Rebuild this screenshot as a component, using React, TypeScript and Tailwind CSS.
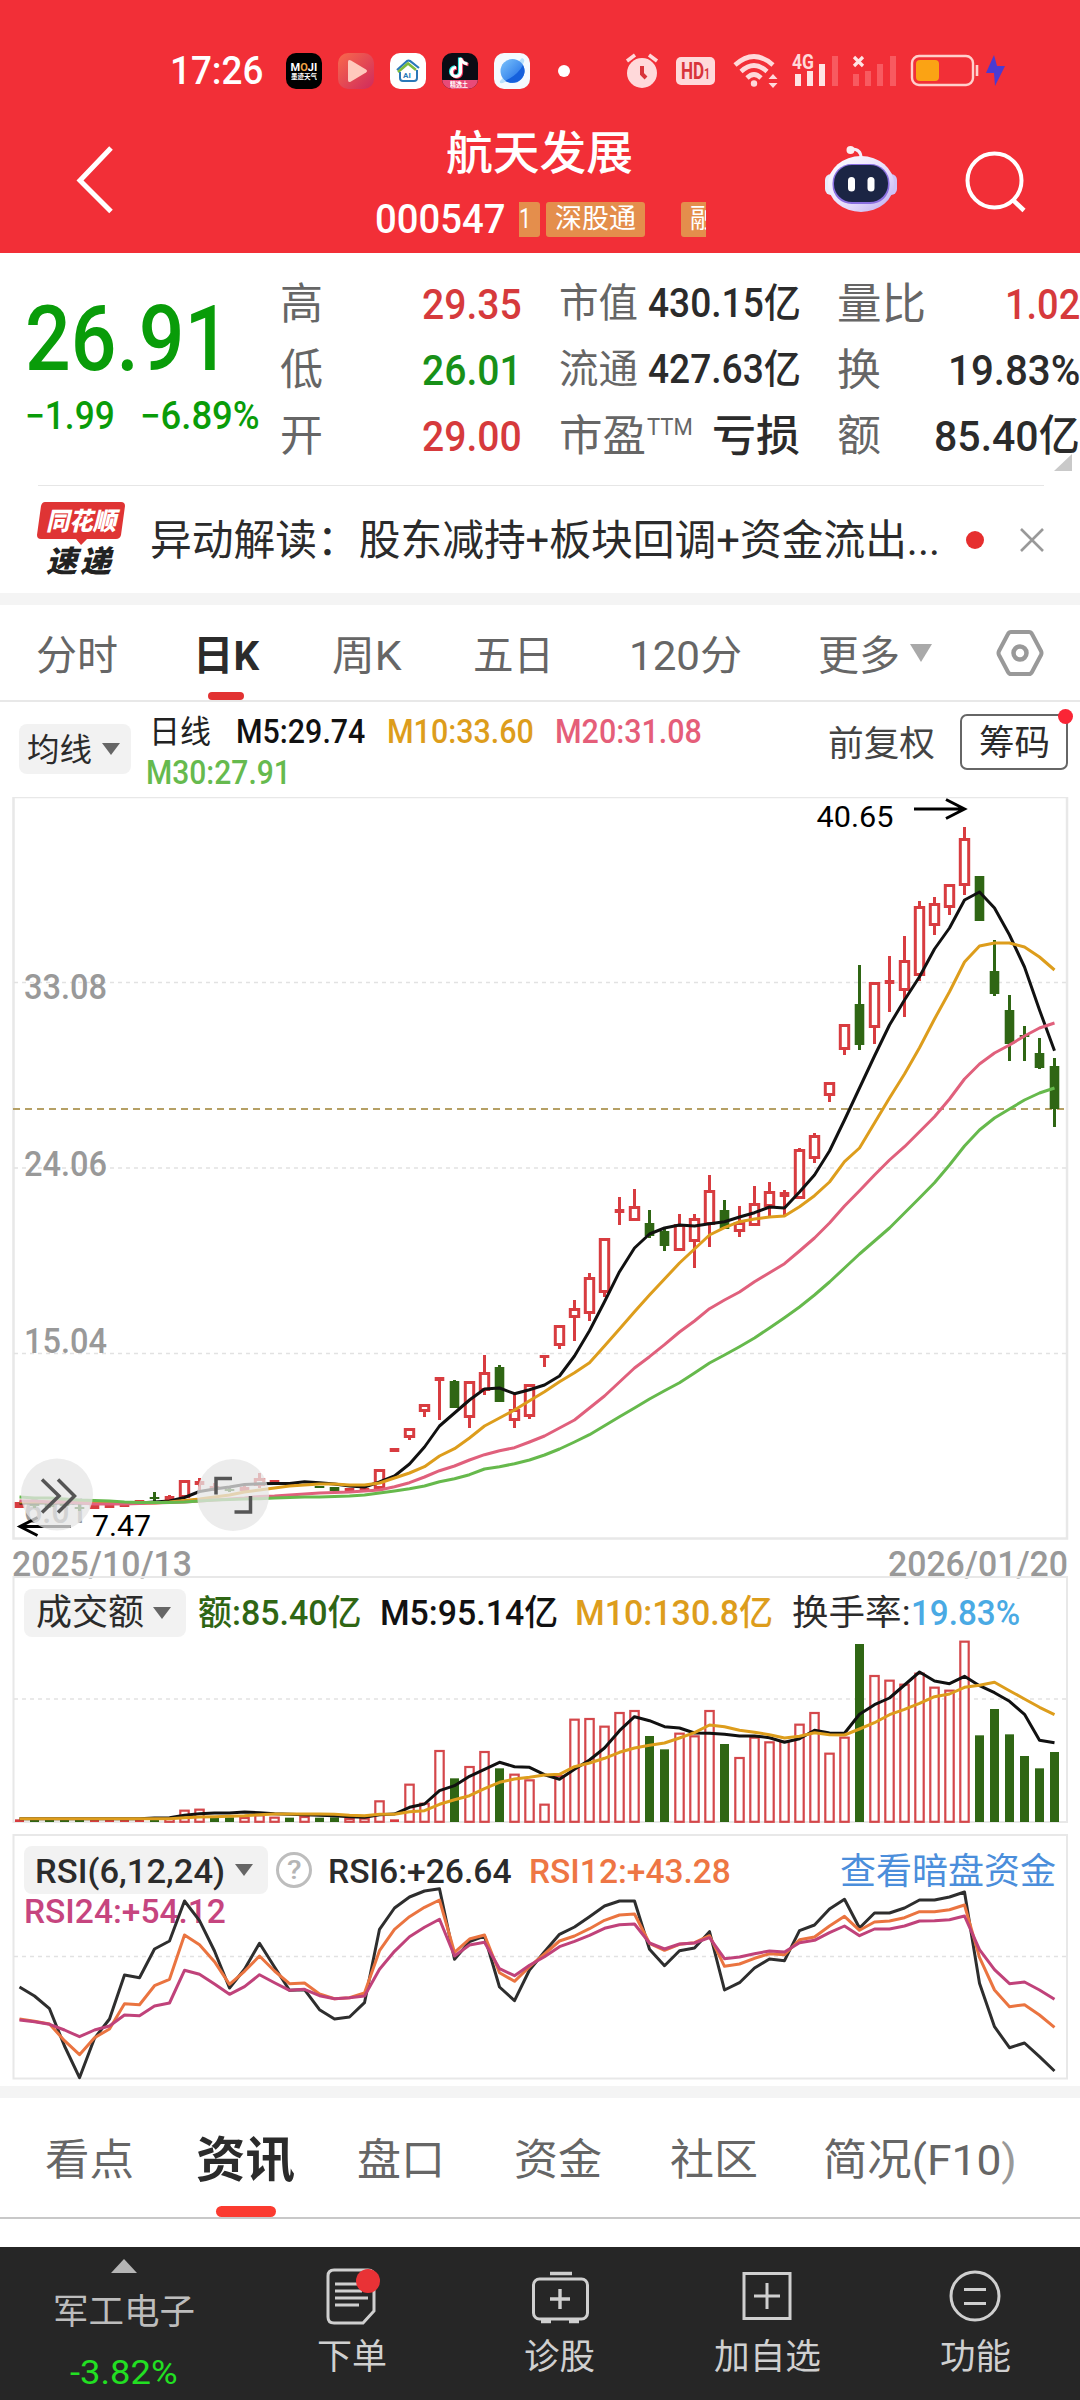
import { useLayoutEffect, useRef, useState } from "react";
import type { ReactNode } from "react";
import clsx from "clsx";

interface FitTextProps {
  children: ReactNode;
  className?: string;
}

// Squeezes or widens one line of text to the width of its box
function FitText({ children, className }: FitTextProps) {
  const boxRef = useRef<HTMLSpanElement | null>(null);
  const textRef = useRef<HTMLSpanElement | null>(null);
  const [scale, setScale] = useState(1);

  useLayoutEffect(() => {
    if (boxRef.current && textRef.current) {
      setScale(boxRef.current.clientWidth / textRef.current.offsetWidth);
    }
  }, []);

  return (
    <span ref={boxRef} className={clsx("block shrink-0 whitespace-nowrap leading-none", className)}>
      <span ref={textRef} className="inline-block origin-left" style={{ transform: `scaleX(${scale})` }}>
        {children}
      </span>
    </span>
  );
}

/* ---------- chart data ---------- */

const xAt = (n: number) => 19.5 + 15 * n;

// index, high, body top, body bottom, low, up?
type Candle = [number, number, number, number, number, 0 | 1];

const candles: Candle[] = [
  [0, 1502, 1502, 1508, 1508, 1], [1, 1502, 1503, 1506, 1508, 0], [2, 1503, 1504, 1507, 1508, 0],
  [3, 1502, 1504, 1506, 1508, 0], [4, 1503, 1507, 1509, 1511, 0], [5, 1505, 1505, 1509, 1509, 1],
  [6, 1505, 1505, 1508, 1508, 1], [7, 1505, 1505, 1507, 1507, 1], [8, 1500, 1500, 1502, 1502, 1],
  [9, 1492, 1497, 1499, 1501, 0], [10, 1495, 1496, 1500, 1500, 1], [11, 1480, 1480, 1498, 1498, 1],
  [12, 1478, 1481, 1485, 1490, 1], [13, 1483, 1486, 1489, 1491, 1], [14, 1488, 1489, 1491, 1492, 0],
  [15, 1486, 1487, 1491, 1491, 1], [16, 1473, 1478, 1486, 1488, 1], [17, 1480, 1480, 1483, 1483, 1],
  [18, 1483, 1483, 1485, 1485, 1], [19, 1484, 1484, 1486, 1486, 1], [20, 1486, 1486, 1488, 1488, 0],
  [21, 1487, 1487, 1491, 1491, 0], [22, 1488, 1488, 1491, 1491, 1], [23, 1488, 1488, 1490, 1490, 1],
  [24, 1469, 1469, 1489, 1489, 1], [25, 1448, 1448, 1452, 1452, 1], [26, 1428, 1428, 1438, 1440, 1],
  [27, 1404, 1404, 1412, 1417, 1], [28, 1377, 1377, 1381, 1420, 1], [29, 1380, 1381, 1408, 1408, 0],
  [30, 1381, 1381, 1418, 1428, 1], [31, 1355, 1372, 1391, 1395, 1], [32, 1365, 1367, 1402, 1402, 0],
  [33, 1393, 1409, 1421, 1428, 1], [34, 1384, 1384, 1417, 1419, 1], [35, 1355, 1355, 1358, 1367, 1],
  [36, 1325, 1325, 1346, 1349, 1], [37, 1300, 1308, 1318, 1341, 1], [38, 1273, 1277, 1314, 1321, 1],
  [39, 1238, 1238, 1293, 1297, 1], [40, 1197, 1209, 1213, 1225, 1], [41, 1189, 1206, 1221, 1221, 1],
  [42, 1210, 1223, 1236, 1238, 0], [43, 1229, 1231, 1246, 1251, 0], [44, 1214, 1224, 1251, 1251, 1],
  [45, 1214, 1218, 1242, 1268, 1], [46, 1175, 1190, 1225, 1247, 1], [47, 1200, 1210, 1229, 1229, 0],
  [48, 1206, 1222, 1232, 1237, 1], [49, 1186, 1203, 1226, 1226, 1], [50, 1182, 1191, 1207, 1216, 1],
  [51, 1190, 1192, 1197, 1215, 1], [52, 1148, 1149, 1199, 1199, 1], [53, 1133, 1135, 1159, 1163, 1],
  [54, 1082, 1082, 1096, 1102, 1], [55, 1024, 1024, 1050, 1055, 1], [56, 965, 1004, 1045, 1050, 0],
  [57, 982, 982, 1028, 1044, 1], [58, 956, 980, 984, 1012, 1], [59, 936, 960, 991, 1017, 1],
  [60, 901, 906, 976, 981, 1], [61, 897, 903, 926, 935, 1], [62, 884, 884, 908, 915, 1],
  [63, 827, 838, 886, 895, 1], [64, 876, 876, 921, 921, 0], [65, 940, 971, 994, 996, 0],
  [66, 995, 1010, 1044, 1061, 0], [67, 1026, 1035, 1037, 1061, 0], [68, 1038, 1053, 1068, 1069, 0],
  [69, 1058, 1066, 1109, 1127, 0],
];

const ma5 = [
  1503, 1503, 1503, 1503, 1503, 1503, 1503, 1503, 1503, 1502, 1501, 1497.5, 1491.5, 1489, 1487, 1484.5, 1483.7, 1483.5,
  1483.5, 1481.7, 1482.7, 1484, 1486, 1487, 1482, 1476, 1464, 1447, 1426, 1413, 1400, 1389, 1388, 1393.7, 1389.7, 1385,
  1376, 1356, 1330.7, 1301.7, 1271.7, 1248, 1234, 1228, 1225, 1226, 1223.7, 1221.7, 1217, 1212.7, 1207, 1208, 1192, 1175,
  1151, 1120, 1088, 1056, 1025, 1000, 976.7, 949, 928, 900, 892, 908, 935, 967, 1010, 1050.7,
];
const ma10 = [
  1502, 1502, 1502, 1502, 1502, 1503, 1503, 1503, 1503, 1503, 1502, 1500.5, 1499, 1497, 1495, 1492, 1490, 1488, 1486, 1485,
  1484, 1484, 1485, 1485, 1483, 1478, 1473, 1466.7, 1456, 1448.7, 1438, 1426, 1418, 1410, 1400.7, 1391.7, 1381.7, 1372.7,
  1362.7, 1346, 1329, 1311.7, 1295, 1279, 1263, 1249, 1235, 1227.7, 1221.7, 1219, 1217, 1216, 1206.7, 1195.7, 1182, 1161.7,
  1148, 1123, 1098, 1074, 1047.7, 1019, 991.7, 962, 946, 943, 943, 947, 957, 970,
];
const ma20 = [
  1501, 1501, 1502, 1502, 1503, 1504, 1504, 1504, 1503.5, 1503, 1502.5, 1502, 1501, 1500, 1499, 1498, 1496.5, 1496, 1495,
  1494, 1493, 1492.5, 1492, 1491, 1490, 1486.7, 1482.7, 1477, 1470.7, 1466, 1460, 1454.7, 1450.7, 1447.7, 1442, 1436, 1428,
  1420, 1408, 1396, 1382, 1368, 1356.7, 1344.7, 1332, 1321, 1308.7, 1300, 1292, 1281.7, 1272.7, 1263.7, 1251, 1238, 1223,
  1206, 1190.7, 1175, 1160, 1146.7, 1131.7, 1116.7, 1099, 1079, 1064, 1053, 1045, 1036, 1028, 1023,
];
const ma30 = [
  1497, 1498, 1498, 1499, 1500, 1500.5, 1501, 1502, 1502.5, 1502.5, 1502.5, 1502, 1501, 1500, 1499.5, 1499, 1498.7, 1498,
  1497.5, 1497, 1497, 1496.5, 1496, 1495, 1493, 1491, 1488.7, 1486, 1481.7, 1478.7, 1474.7, 1469, 1466.7, 1463.7, 1460,
  1455, 1449, 1442, 1434.7, 1425.7, 1416.7, 1408, 1399, 1390.7, 1382.7, 1373, 1363, 1355, 1346.7, 1338, 1328, 1317.7, 1307,
  1295, 1282, 1268, 1254, 1241, 1228, 1213, 1198, 1182.7, 1165, 1146, 1130, 1118, 1109, 1100, 1093, 1088,
];

// Turnover pane, thirds of a pixel below y=1580
const volumes = [
  718, 719, 719, 719, 719, 719, 719, 718, 717, 717, 713, 689, 686, 712, 712, 711, 703, 710, 713, 708, 713, 712, 714, 713,
  661, 718, 611, 668, 510, 595, 558, 513, 565, 581, 598, 671, 585, 416, 414, 437, 396, 390, 468, 508, 458, 466, 390, 492,
  531, 470, 484, 482, 431, 396, 518, 470, 192, 285, 299, 311, 278, 320, 329, 182, 466, 387, 463, 528, 565, 516,
];
const downVolumes = new Set([1, 2, 3, 4, 9, 13, 14, 18, 20, 21, 29, 32, 42, 43, 47, 56, 64, 65, 66, 67, 68, 69]);
const volMa5 = [
  716, 716, 716, 716, 716, 716, 716, 716, 716, 714, 713, 706, 701, 699, 699, 696, 698, 701, 703, 704, 706, 707, 710, 712,
  704, 702, 682, 672, 632, 617, 589, 568, 547, 560, 562, 584, 598, 568, 540, 504, 452, 410, 422, 440, 444, 459, 460, 463,
  468, 468, 473, 487, 476, 451, 459, 460, 403, 374, 354, 315, 276, 303, 311, 289, 317, 338, 364, 403, 481, 488,
];
const volMa10 = [
  716, 716, 716, 716, 716, 716, 716, 716, 716, 716, 716, 713, 711, 710, 709, 707, 704, 702, 702, 702, 702, 703, 706, 707,
  703, 703, 695, 692, 673, 659, 647, 626, 607, 597, 592, 585, 583, 560, 549, 535, 517, 504, 496, 489, 474, 458, 435, 440,
  451, 457, 464, 474, 469, 458, 464, 465, 447, 428, 404, 388, 370, 350, 342, 322, 316, 307, 332, 357, 382, 404,
];

// RSI pane, thirds of a pixel below y=1820
const rsi6 = [
  501, 528, 566, 678, 773, 655, 597, 465, 473, 387, 363, 243, 302, 393, 504, 448, 370, 441, 511, 509, 569, 597, 591, 548,
  328, 264, 231, 213, 206, 418, 365, 348, 501, 542, 450, 395, 343, 321, 290, 258, 243, 243, 388, 437, 392, 384, 335, 510,
  488, 444, 417, 422, 332, 315, 267, 238, 324, 279, 279, 264, 240, 240, 231, 216, 490, 620, 683, 669, 710, 753,
];
const rsi12 = [
  597, 604, 612, 662, 704, 653, 627, 551, 554, 497, 478, 345, 374, 425, 493, 454, 408, 453, 491, 489, 522, 536, 533, 519,
  392, 328, 290, 262, 240, 397, 357, 345, 458, 484, 440, 402, 363, 348, 326, 301, 285, 282, 370, 391, 373, 368, 347, 439,
  432, 415, 401, 404, 359, 351, 318, 289, 331, 306, 303, 293, 275, 275, 269, 255, 412, 510, 560, 554, 585, 622,
];
const rsi24 = [
  600, 605, 613, 630, 650, 630, 618, 585, 587, 558, 549, 451, 463, 492, 523, 500, 464, 488, 511, 508, 527, 536, 533, 528,
  448, 394, 350, 322, 298, 408, 375, 367, 446, 467, 436, 410, 380, 364, 346, 325, 314, 312, 369, 387, 372, 369, 353, 416,
  411, 401, 393, 396, 368, 361, 338, 318, 347, 327, 327, 318, 303, 302, 299, 288, 389, 449, 491, 486, 510, 538,
];

const toPoints = (values: number[], map: (v: number) => number = (v) => v) =>
  values.map((v, n) => `${xAt(n)},${map(v).toFixed(1)}`).join(" ");

const volY = (v: number) => 1580 + v / 3;
const rsiY = (v: number) => 1820 + v / 3;

const UP = "#d83c40";
const DOWN = "#2f6614";

interface LineProps {
  points: string;
  color: string;
}

function Line({ points, color }: LineProps) {
  return <polyline points={points} fill="none" stroke={color} strokeWidth="3" strokeLinejoin="round" />;
}

/* ---------- status bar ---------- */

function AppIcons() {
  return (
    <div className="flex items-center gap-4 ml-[23px]">
      <div className="w-9 h-9 rounded-[10px] bg-black flex flex-col items-center justify-center text-white">
        <FitText className="w-[27px] text-[11px] font-bold">
          M<span className="text-[#f0a040]">O</span>JI
        </FitText>
        <FitText className="w-[26px] text-[7px] font-bold mt-px">墨迹天气</FitText>
      </div>
      <svg viewBox="0 0 36 36" className="w-9 h-9">
        <defs>
          <linearGradient id="play" x1="0" y1="0" x2="1" y2="1">
            <stop offset="0" stopColor="#f9694c" />
            <stop offset="1" stopColor="#cf2a5c" />
          </linearGradient>
        </defs>
        <rect width="36" height="36" rx="10" fill="url(#play)" />
        <path d="M10 9q0-3 3-1.500l15 9q2 1.500 0 3l-15 9q-3 1.500-3-1.500z" fill="#ffc9bd" />
      </svg>
      <svg viewBox="0 0 36 36" className="w-9 h-9">
        <rect width="36" height="36" rx="10" fill="#fff" />
        <path d="M7 17 17 8q1.500-1 3 0l9 7" fill="none" stroke="#2a78b8" strokeWidth="2.200" />
        <path d="m8 19 10-8.500 8 6.500" fill="none" stroke="#7cbb3c" strokeWidth="2.500" />
        <path d="M10 19v6q0 3 3 3h11q3 0 3-3v-8" fill="none" stroke="#2a78b8" strokeWidth="2" />
        <text x="13" y="25" fontSize="8" fontWeight="700" fill="#2a78b8" fontFamily="Roboto">AI</text>
      </svg>
      <div className="relative w-9 h-9 rounded-[10px] bg-[#0b0b14] overflow-hidden">
        <svg viewBox="0 0 36 36" className="w-9 h-9">
          <g fill="none" strokeWidth="3.200">
            <path d="M18.500 5v14a4.500 4.500 0 1 1-4.500-4.500M18.500 5q1 5 7 6" stroke="#2be8e4" transform="translate(-1 -.6)" />
            <path d="M18.500 5v14a4.500 4.500 0 1 1-4.500-4.500M18.500 5q1 5 7 6" stroke="#f8345c" transform="translate(1 .6)" />
            <path d="M18.500 5v14a4.500 4.500 0 1 1-4.500-4.500M18.500 5q1 5 7 6" stroke="#fff" />
          </g>
          <rect y="27" width="36" height="9" fill="#e84a78" />
        </svg>
        <div className="absolute bottom-0 left-2 text-white">
          <FitText className="w-[18px] text-[7px] font-bold">精选土</FitText>
        </div>
      </div>
      <svg viewBox="0 0 36 36" className="w-9 h-9">
        <defs>
          <linearGradient id="planet" x1="0" y1="0" x2="1" y2="1">
            <stop offset="0" stopColor="#7cc4fc" />
            <stop offset="1" stopColor="#1463e4" />
          </linearGradient>
        </defs>
        <rect width="36" height="36" rx="10" fill="#f4faff" />
        <path d="M6 28q-1 4 5 1l18-18q3-5-1-6z" fill="#b8e0fc" />
        <circle cx="18.500" cy="18" r="12" fill="url(#planet)" />
        <path d="M11 28Q24 22 29 12q4 8-2 14t-16 2z" fill="#1560dc" />
      </svg>
    </div>
  );
}

function StatusIcons() {
  return (
    <div className="flex items-center">
      <span className="w-3 h-3 rounded-full bg-white ml-[28px]" />
      <svg viewBox="624 51 36 40" className="w-9 h-10 ml-[54px]">
        <circle cx="642" cy="73" r="15" fill="#ffd9da" />
        <path d="m627 61 8-6M657 61l-8-6" stroke="#ffd9da" strokeWidth="3.500" fill="none" />
        <path d="M642 66v8l4 4" stroke="#d8343a" strokeWidth="4" fill="none" />
      </svg>
      <div className="w-[39px] h-7 rounded-[5px] bg-[#ffd9da] text-[#d8343a] flex items-end justify-center ml-4 pb-[2px]">
        <FitText className="w-[23px] text-[23px] font-bold">HD</FitText>
        <FitText className="w-[6px] text-[14px] font-bold mb-[2px]">1</FitText>
      </div>
      <svg viewBox="732 51 48 40" className="w-12 h-10 ml-[17px]">
        <g fill="none" stroke="#ffd9da" strokeWidth="4.600">
          <path d="M735 65q19-17 38 0" />
          <path d="M741 71.500q13-12 26 0" />
          <path d="M747 78q7-7 14 0" />
        </g>
        <circle cx="754" cy="83.500" r="3.200" fill="#ffd9da" />
        <path d="m773 74 4.500 5h-9zM773 88l4.500-5h-9z" fill="#ffd9da" />
      </svg>
      <svg viewBox="790 51 50 40" className="w-[50px] h-10 ml-[10px]">
        <text x="792" y="69" fontSize="20" fontWeight="700" fill="#ffd9da" fontFamily="Roboto" textLength="22" lengthAdjust="spacingAndGlyphs">4G</text>
        <path d="M795 74h6v12h-6zM807 71h6v15h-6zM819 64h6v22h-6z" fill="#ffe4e4" />
        <path d="M832 56h6v30h-6z" fill="#f85a60" />
      </svg>
      <svg viewBox="850 51 50 40" className="w-[50px] h-10 ml-[10px]">
        <path d="m854 57 9 9m0-9-9 9" stroke="#ffe4e4" strokeWidth="3.200" />
        <path d="M853 74h6v12h-6zM865 71h6v15h-6zM877 64h6v22h-6zM890 56h6v30h-6z" fill="#f85a60" />
      </svg>
      <svg viewBox="910 51 70 40" className="w-[70px] h-10 ml-[10px]">
        <rect x="912" y="56" width="61" height="29" rx="7" fill="none" stroke="#ffd0cc" strokeWidth="2.400" />
        <rect x="916" y="60" width="23" height="21" rx="4" fill="#fba314" />
        <path d="M977 65v11" stroke="#ffd0cc" strokeWidth="2.600" />
      </svg>
      <svg viewBox="984 51 24 40" className="w-6 h-10 ml-1">
        <path d="m994 55-8 18h8l1 13 10-20h-8z" fill="#4a3bd2" />
      </svg>
    </div>
  );
}

function Robot() {
  return (
    <svg viewBox="823 144 76 70" className="w-[76px] h-[70px]">
      <defs>
        <linearGradient id="shell" x1="0" y1="0" x2="1" y2="1">
          <stop offset="0" stopColor="#fff" />
          <stop offset=".6" stopColor="#e6dcfb" />
          <stop offset="1" stopColor="#b9a8f0" />
        </linearGradient>
      </defs>
      <path d="M861 158q0-9-9-9" fill="none" stroke="#f4eefc" strokeWidth="3" />
      <circle cx="850.500" cy="150" r="4" fill="#fbeef2" />
      <rect x="825" y="174" width="12" height="21" rx="6" fill="#e9ecfb" />
      <rect x="885" y="174" width="12" height="21" rx="6" fill="#cfc2f6" />
      <ellipse cx="861" cy="184" rx="33" ry="28" fill="url(#shell)" />
      <rect x="832.500" y="164" width="57" height="40" rx="19" fill="#8a6fe0" />
      <rect x="834" y="165" width="54" height="37" rx="18" fill="#1b2544" />
      <rect x="848" y="177" width="7" height="14.500" rx="3.500" fill="#fff" />
      <rect x="867.500" y="177" width="7" height="14.500" rx="3.500" fill="#fff" />
    </svg>
  );
}

function Header() {
  return (
    <header className="h-[253px] bg-[#f22f37] text-white">
      <div className="h-[53px]" />
      <div className="h-9 flex items-center pl-[170px]">
        <FitText className="w-[93px] text-[38px] font-medium">17:26</FitText>
        <AppIcons />
        <StatusIcons />
      </div>
      <div className="flex h-[164px]">
        <svg viewBox="70 144 48 76" className="w-12 h-[76px] ml-[70px] mt-[53px]">
          <path d="M111 150 80 182.500l31 31" fill="none" stroke="#fff" strokeWidth="5" />
        </svg>
        <div className="ml-[257px] w-[332px] pt-[41px]">
          <FitText className="w-[187px] text-[46px] font-medium ml-[71px]">航天发展</FitText>
          <div className="flex items-center h-[35px] mt-[26px]">
            <FitText className="w-[130px] text-[40px] font-medium">000547</FitText>
            <div className="flex items-center w-[187px] h-[35px] ml-[14px] overflow-hidden text-[27px]">
              <span className="w-[21px] h-full bg-[#e48e4c] rounded-r-[3px] shrink-0 flex items-center leading-none">
                <FitText className="w-[12px]">1</FitText>
              </span>
              <span className="w-[99px] h-full bg-[#e48e4c] rounded-[3px] ml-[6px] shrink-0 flex items-center justify-center">
                <FitText className="w-[81px]">深股通</FitText>
              </span>
              <span className="w-[45px] h-full bg-[#e48e4c] rounded-[3px] ml-[36px] pl-[9px] shrink-0 flex items-center">
                <FitText className="w-[27px]">融</FitText>
              </span>
            </div>
          </div>
        </div>
        <div className="pt-[55px] ml-[116px]">
          <Robot />
        </div>
        <svg viewBox="964 150 64 64" className="w-16 h-16 ml-[65px] mt-[61px]">
          <circle cx="994.500" cy="180.500" r="27" fill="none" stroke="#fff" strokeWidth="4" />
          <path d="m1013 200 11 10.500" stroke="#fff" strokeWidth="4.500" />
        </svg>
      </div>
    </header>
  );
}

/* ---------- quote ---------- */

function Quote() {
  return (
    <section className="h-[232px] flex pt-[18px] relative">
      <div className="w-[280px] pl-[25px] text-[#099c09] shrink-0">
        <FitText className="w-[205px] text-[91px] font-medium mt-[23px]">26.91</FitText>
        <div className="flex mt-[12px]">
          <FitText className="w-[90px] text-[38px] font-medium">−1.99</FitText>
          <FitText className="w-[120px] text-[38px] font-medium ml-[25px]">−6.89%</FitText>
        </div>
      </div>

      <div className="w-[242px] shrink-0 text-[43px] text-[#666]">
        <div className="h-[66px] flex items-center justify-between">
          <FitText className="w-[43px]">高</FitText>
          <FitText className="w-[100px] font-medium text-[#d63a3c]">29.35</FitText>
        </div>
        <div className="h-[66px] flex items-center justify-between">
          <FitText className="w-[43px]">低</FitText>
          <FitText className="w-[100px] font-medium text-[#189018]">26.01</FitText>
        </div>
        <div className="h-[66px] flex items-center justify-between">
          <FitText className="w-[43px]">开</FitText>
          <FitText className="w-[100px] font-medium text-[#d63a3c]">29.00</FitText>
        </div>
      </div>

      <div className="w-[242px] shrink-0 ml-[37px] text-[40px] text-[#666]">
        <div className="h-[66px] flex items-center justify-between">
          <FitText className="w-[79px]">市值</FitText>
          <FitText className="w-[153px] font-medium text-[#2b2b2b]">430.15亿</FitText>
        </div>
        <div className="h-[66px] flex items-center justify-between">
          <FitText className="w-[79px]">流通</FitText>
          <FitText className="w-[153px] font-medium text-[#2b2b2b]">427.63亿</FitText>
        </div>
        <div className="h-[66px] flex items-center text-[43px]">
          <FitText className="w-[87px]">市盈</FitText>
          <FitText className="w-[46px] text-[24px] -mt-[18px] ml-px">TTM</FitText>
          <FitText className="w-[88px] font-medium text-[#2b2b2b] ml-[19px]">亏损</FitText>
        </div>
      </div>

      <div className="w-[243px] shrink-0 ml-[36px] text-[43px] text-[#666]">
        <div className="h-[66px] flex items-center justify-between">
          <FitText className="w-[89px]">量比</FitText>
          <FitText className="w-[75px] font-medium text-[#d63a3c]">1.02</FitText>
        </div>
        <div className="h-[66px] flex items-center justify-between">
          <FitText className="w-[44px]">换</FitText>
          <FitText className="w-[132px] font-medium text-[#2b2b2b]">19.83%</FitText>
        </div>
        <div className="h-[66px] flex items-center justify-between">
          <FitText className="w-[44px]">额</FitText>
          <FitText className="w-[146px] font-medium text-[#2b2b2b]">85.40亿</FitText>
        </div>
      </div>
      <svg viewBox="0 0 18 17" className="absolute left-[1054px] top-[201px] w-[18px] h-[17px]">
        <path d="M18 0v17H0z" fill="#c9c9c9" />
      </svg>
    </section>
  );
}

function NewsRow() {
  return (
    <section className="h-[108px]">
      <div className="h-px bg-[#e6e6e6] ml-[38px] mr-[36px]" />
      <div className="flex items-center h-[107px] pl-[36px]">
        <div className="relative w-[90px] h-[76px] mt-[-2px]">
          <svg viewBox="36 502 90 46" className="absolute left-0 top-0 w-[90px] h-[46px]">
            <path d="M45 503h76q4 0 4 4l-4 29q-1 4-5 4H87l-6 6-5-6H41q-4 0-4-4l4-29q1-4 4-4z" fill="#df3434" />
          </svg>
          <div className="relative pt-[8px] pl-[10px] text-white italic">
            <FitText className="w-[70px] text-[25px] font-black">同花顺</FitText>
          </div>
          <div className="flex gap-[3px] pt-[13px] pl-[10px] text-[#222] italic">
            <FitText className="w-[31px] text-[30px] font-black">速</FitText>
            <FitText className="w-[31px] text-[30px] font-black">递</FitText>
          </div>
        </div>
        <FitText className="w-[790px] text-[42px] text-[#2b2b2b] ml-[24px] mt-[2px]">异动解读：股东减持+板块回调+资金流出...</FitText>
        <span className="w-[18px] h-[18px] rounded-full bg-[#e62e2e] ml-[26px]" />
        <svg viewBox="0 0 26 26" className="w-[26px] h-[26px] ml-[35px]">
          <path d="m2 2 22 22M24 2 2 24" stroke="#999" strokeWidth="2.600" />
        </svg>
      </div>
    </section>
  );
}

/* ---------- period tabs ---------- */

function PeriodTabs() {
  return (
    <nav className="h-[97px] border-b-2 border-[#e8e8e8] flex text-[41px] text-[#666]">
      <FitText className="w-[82px] ml-[36px] mt-[31px]">分时</FitText>
      <div className="w-[64px] ml-[76px] mt-[31px] flex flex-col items-center text-[#2b2b2b]">
        <FitText className="w-[66px] font-bold">日K</FitText>
        <span className="w-9 h-[9px] rounded-[4px] bg-[#e23232] mt-[15px]" />
      </div>
      <FitText className="w-[70px] ml-[74px] mt-[31px]">周K</FitText>
      <FitText className="w-[81px] ml-[71px] mt-[31px]">五日</FitText>
      <FitText className="w-[113px] ml-[75px] mt-[31px]">120分</FitText>
      <FitText className="w-[82px] ml-[76px] mt-[31px]">更多</FitText>
      <svg viewBox="0 0 22 18" className="w-[22px] h-[18px] ml-[10px] mt-[39px]">
        <path d="M0 0h22L11 18z" fill="#a9a9a9" />
      </svg>
      <svg viewBox="995 628 50 50" className="w-[50px] h-[50px] ml-[63px] mt-[23px]">
        <path d="M1011 632h18q2 0 3 2l9 17q1 2 0 4l-9 17q-1 2-3 2h-18q-2 0-3-2l-9-17q-1-2 0-4l9-17q1-2 3-2z" fill="none" stroke="#999" strokeWidth="4" />
        <circle cx="1020" cy="653" r="6.500" fill="none" stroke="#999" strokeWidth="4.500" />
      </svg>
    </nav>
  );
}

function Caret({ className }: { className?: string }) {
  return (
    <svg viewBox="0 0 18 12" className={clsx("w-[18px] h-3", className)}>
      <path d="M0 0h18L9 12z" fill="#666" />
    </svg>
  );
}

function MaLegend() {
  return (
    <div className="h-[95px] flex">
      <div className="w-28 h-[50px] rounded-lg bg-[#f2f2f2] ml-[19px] mt-[22px] flex items-center pl-2">
        <FitText className="w-[65px] text-[32px] text-[#2b2b2b] mt-px">均线</FitText>
        <Caret className="ml-[10px]" />
      </div>
      <div className="ml-[16px] w-[640px] text-[32.500px] font-medium">
        <div className="flex mt-[14px]">
          <FitText className="w-[62px] ml-[2px] text-[#222] font-normal text-[32px]">日线</FitText>
          <FitText className="w-[129px] ml-[25px] text-[#111]">M5:29.74</FitText>
          <FitText className="w-[147px] ml-[22px] text-[#dd9d1c]">M10:33.60</FitText>
          <FitText className="w-[147px] ml-[21px] text-[#e55e79]">M20:31.08</FitText>
        </div>
        <FitText className="w-[145px] mt-[8px] -ml-px text-[#66ba4e]">M30:27.91</FitText>
      </div>
      <FitText className="w-[107px] text-[35px] text-[#444] ml-[41px] mt-[25px]">前复权</FitText>
      <div className="relative ml-[25px] mt-3 w-[108px] h-[56px] rounded-[7px] border-2 border-[#666] flex items-center justify-center">
        <FitText className="w-[71px] text-[35px] text-[#2b2b2b] mt-[2px]">筹码</FitText>
        <span className="absolute -right-[7px] -top-[7px] w-[15px] h-[15px] rounded-full bg-[#fa2536]" />
      </div>
    </div>
  );
}

/* ---------- charts ---------- */

function CandleShape({ candle }: { candle: Candle }) {
  const [n, high, top, bottom, low, up] = candle;
  const x = xAt(n);
  const color = up ? UP : DOWN;
  const hollow = up && bottom - top > 7;
  return (
    <g>
      {high < top && <path d={`M${x} ${high}V${top + 1}`} stroke={color} strokeWidth="3" />}
      {low > bottom && <path d={`M${x} ${bottom - 1}V${low}`} stroke={color} strokeWidth="3" />}
      {hollow ? (
        <rect x={x - 4.2} y={top + 1.5} width="8.400" height={bottom - top - 3} fill="#fff" stroke={color} strokeWidth="3" />
      ) : (
        <rect x={x - 4.8} y={top} width="9.600" height={bottom - top} fill={color} />
      )}
    </g>
  );
}

function PriceChart() {
  return (
    <div className="relative h-[779px]">
      <svg viewBox="0 797 1080 789" className="block w-[1080px] h-[789px]" fontFamily="Roboto, sans-serif">
        <rect x="13.500" y="797" width="1053.500" height="741.500" fill="none" stroke="#e8e8e8" strokeWidth="2.500" />
        <path d="M14 982.500h1053M14 1168h1053M14 1353.500h1053" stroke="#e2e2e2" strokeWidth="1.500" strokeDasharray="4 4" />
        <path d="M13 1109h1054" stroke="#b5a065" strokeWidth="2" strokeDasharray="7 5" />
        <g fill="#999" fontSize="35" fontWeight="500">
          <text x="24" y="999" textLength="83" lengthAdjust="spacingAndGlyphs">33.08</text>
          <text x="24" y="1176" textLength="83" lengthAdjust="spacingAndGlyphs">24.06</text>
          <text x="24" y="1353" textLength="83" lengthAdjust="spacingAndGlyphs">15.04</text>
          <text x="24" y="1523" textLength="64" lengthAdjust="spacingAndGlyphs">6.01</text>
          <text x="12" y="1576" textLength="180" lengthAdjust="spacingAndGlyphs">2025/10/13</text>
          <text x="888" y="1576" textLength="180" lengthAdjust="spacingAndGlyphs">2026/01/20</text>
        </g>
        {candles.map((c) => (
          <CandleShape key={c[0]} candle={c} />
        ))}
        <Line points={toPoints(ma5)} color="#111" />
        <Line points={toPoints(ma10)} color="#dd9d1c" />
        <Line points={toPoints(ma20)} color="#e0607c" />
        <Line points={toPoints(ma30)} color="#66b94c" />
        <g fill="none" stroke="#000" strokeWidth="3">
          <path d="M914 809h50M946 799.500l18.500 9.500-18.500 9.500" />
          <path d="M71 1526.500H20M37.500 1517.500 20 1526.500l17.500 9" />
        </g>
        <text x="816.500" y="827" fontSize="30" textLength="77" lengthAdjust="spacingAndGlyphs">40.65</text>
        <text x="92" y="1536" fontSize="30" textLength="59" lengthAdjust="spacingAndGlyphs">7.47</text>

        {/* Floating buttons */}
        <g fill="#e6e6e6" fillOpacity=".75">
          <circle cx="57" cy="1494.500" r="36" />
          <circle cx="233" cy="1495" r="36" />
        </g>
        <g fill="none" stroke="#555" strokeWidth="3.500">
          <path d="m42 1479.500 17 16.500-17 16.500M58 1479.500l16.500 16.500-16.500 16.500" />
          <path d="M232 1478.500h-16v16M250.500 1496v16h-16" />
        </g>
      </svg>
    </div>
  );
}

function TurnoverChart() {
  return (
    <div className="relative h-[258px]">
      <svg viewBox="0 1576 1080 258" className="absolute inset-0 w-[1080px] h-[258px]">
        <path d="M13.500 1822v-245h1053.500v245z" fill="none" stroke="#e8e8e8" strokeWidth="2" />
        <path d="M14 1699h1053" stroke="#e2e2e2" strokeWidth="1.500" strokeDasharray="4 4" />
        {volumes.map((v, n) => {
          const y = volY(v);
          const short = 1822 - y < 4;
          return downVolumes.has(n) || short ? (
            <rect key={n} x={xAt(n) - 4.5} y={y} width="9" height={1822 - y} fill={downVolumes.has(n) ? DOWN : UP} />
          ) : (
            <rect key={n} x={xAt(n) - 4.2} y={y + 1} width="8.400" height={1820.8 - y} fill="#fff" stroke="#d4474b" strokeWidth="2.200" />
          );
        })}
        <Line points={toPoints(volMa5, volY)} color="#111" />
        <Line points={toPoints(volMa10, volY)} color="#dd9d1c" />
      </svg>
      <div className="relative flex items-center h-[48px] pl-6 top-[13px] text-[35px] font-medium">
        <div className="w-[162px] h-12 rounded-lg bg-[#f2f2f2] flex items-center pl-[12px]">
          <FitText className="w-[108px] text-[36px] text-[#2b2b2b] font-normal">成交额</FitText>
          <Caret className="ml-[9px]" />
        </div>
        <FitText className="w-[164px] ml-[12px] text-[#2f6614]">额:85.40亿</FitText>
        <FitText className="w-[178px] ml-[18px] text-[#111]">M5:95.14亿</FitText>
        <FitText className="w-[198px] ml-[17px] text-[#dd9d1c]">M10:130.8亿</FitText>
        <FitText className="w-[118px] ml-[19px] text-[#2b2b2b] font-normal">换手率:</FitText>
        <FitText className="w-[109px] ml-px text-[#4aaae4]">19.83%</FitText>
      </div>
    </div>
  );
}

function RsiChart() {
  return (
    <div className="relative h-[252px]">
      <svg viewBox="0 1834 1080 252" className="absolute inset-0 w-[1080px] h-[252px]">
        <rect x="13.500" y="1835" width="1053.500" height="243.500" fill="none" stroke="#e8e8e8" strokeWidth="2" />
        <path d="M14 1956.500h1053" stroke="#e2e2e2" strokeWidth="1.500" strokeDasharray="4 4" />
      </svg>
      <div className="relative flex items-center h-12 pl-6 top-3 text-[34px] font-medium text-[#2b2b2b]">
        <div className="w-[244px] h-12 rounded-lg bg-[#f2f2f2] flex items-center pl-[11px]">
          <FitText className="w-[190px] mt-px">RSI(6,12,24)</FitText>
          <Caret className="ml-[10px]" />
        </div>
        <span className="w-9 h-9 rounded-full border-[3px] border-[#bdbdbd] ml-2 flex items-center justify-center text-[#b5b5b5]">
          <FitText className="w-[15px] text-[26px]">?</FitText>
        </span>
        <FitText className="w-[184px] ml-[16px] mt-px">RSI6:+26.64</FitText>
        <FitText className="w-[202px] ml-[17px] mt-px text-[#ee7644]">RSI12:+43.28</FitText>
        <FitText className="w-[216px] ml-[109px] mt-[3px] text-[36px] text-[#4b8edb] font-normal">查看暗盘资金</FitText>
      </div>
      <div className="relative top-[12px] pl-6">
        <FitText className="w-[202px] text-[34px] font-medium text-[#c6457f]">RSI24:+54.12</FitText>
      </div>
      <svg viewBox="0 1834 1080 252" className="absolute inset-0 w-[1080px] h-[252px]">
        <Line points={toPoints(rsi6, rsiY)} color="#2e2e2e" />
        <Line points={toPoints(rsi12, rsiY)} color="#ea7440" />
        <Line points={toPoints(rsi24, rsiY)} color="#c0427a" />
      </svg>
    </div>
  );
}

/* ---------- lower part ---------- */

function InfoTabs() {
  return (
    <nav className="h-[149px] bg-white">
      <div className="h-[121px] border-b-2 border-[#c8c8c8] flex text-[43px] text-[#666]">
        <FitText className="w-[89px] ml-[45px] mt-[41px]">看点</FitText>
        <div className="w-[99px] ml-[62px] mt-[38px] flex flex-col items-center text-[#2b2b2b]">
          <FitText className="w-[99px] text-[49px] font-bold">资讯</FitText>
          <span className="w-[60px] h-3 rounded-full bg-[#fb3b30] mt-[21px]" />
        </div>
        <FitText className="w-[88px] ml-[62px] mt-[41px]">盘口</FitText>
        <FitText className="w-[88px] ml-[69px] mt-[41px]">资金</FitText>
        <FitText className="w-[88px] ml-[68px] mt-[41px]">社区</FitText>
        <FitText className="w-[194px] ml-[65px] mt-[41px]">
          简况(F10<span className="text-[#999]">)</span>
        </FitText>
      </div>
    </nav>
  );
}

function BottomBar() {
  return (
    <footer className="h-[153px] bg-[#262626] flex text-[35px] text-[#d0d0d0]">
      <div className="w-[248px] flex flex-col items-center pt-3 text-[#bdbdbd]">
        <svg viewBox="0 0 26 14" className="w-[26px] h-[14px]">
          <path d="M13 0l13 14H0z" fill="#b5b5b5" />
        </svg>
        <FitText className="w-[142px] mt-[22px]">军工电子</FitText>
        <FitText className="w-[108px] text-[34px] text-[#22e022] mt-[25px]">-3.82%</FitText>
      </div>
      <div className="w-[208px] flex flex-col items-center pt-5">
        <svg viewBox="324 2268 58 60" className="w-[58px] h-[60px]">
          <path d="M335 2271h34q6 0 6 6v35l-11 12h-29q-6 0-6-6v-41q0-6 6-6z" fill="none" stroke="#cfcfcf" strokeWidth="3" />
          <path d="M336 2285h24M336 2292h27M336 2299h33M336 2306h24" stroke="#cfcfcf" strokeWidth="3" />
          <circle cx="369" cy="2282" r="12" fill="#e93236" />
        </svg>
        <FitText className="w-[70px] mt-[13px]">下单</FitText>
      </div>
      <div className="w-[207px] flex flex-col items-center pt-5">
        <svg viewBox="529 2268 60 60" className="w-[60px] h-[60px]">
          <rect x="532.500" y="2280" width="54" height="40" rx="6" fill="none" stroke="#cfcfcf" strokeWidth="3" />
          <path d="M549 2274.500h22M540 2322.500h10M568 2322.500h10M559 2290v20M549 2300h20" stroke="#cfcfcf" strokeWidth="3.400" />
        </svg>
        <FitText className="w-[71px] mt-[13px]">诊股</FitText>
      </div>
      <div className="w-[208px] flex flex-col items-center pt-5">
        <svg viewBox="737 2268 60 60" className="w-[60px] h-[60px]">
          <rect x="744" y="2274.500" width="46" height="45" fill="none" stroke="#cfcfcf" strokeWidth="3" />
          <path d="M767 2284v26M754 2297h26" stroke="#cfcfcf" strokeWidth="3" />
        </svg>
        <FitText className="w-[107px] mt-[13px]">加自选</FitText>
      </div>
      <div className="w-[208px] flex flex-col items-center pt-5">
        <svg viewBox="945 2268 60 60" className="w-[60px] h-[60px]">
          <circle cx="975" cy="2297" r="24" fill="none" stroke="#cfcfcf" strokeWidth="3" />
          <path d="M964 2290.500h22M964 2304.500h22" stroke="#cfcfcf" strokeWidth="3" />
        </svg>
        <FitText className="w-[71px] mt-[13px]">功能</FitText>
      </div>
    </footer>
  );
}

export default function App() {
  return (
    <div className="w-[1080px] h-[2400px] bg-white overflow-hidden font-[Roboto,'Noto_Sans_CJK_SC',sans-serif]">
      <Header />
      <Quote />
      <NewsRow />
      <div className="h-3 bg-[#f4f4f4]" />
      <PeriodTabs />
      <MaLegend />
      <PriceChart />
      <TurnoverChart />
      <RsiChart />
      <div className="h-3 bg-[#f4f4f4]" />
      <InfoTabs />
      <BottomBar />
    </div>
  );
}
